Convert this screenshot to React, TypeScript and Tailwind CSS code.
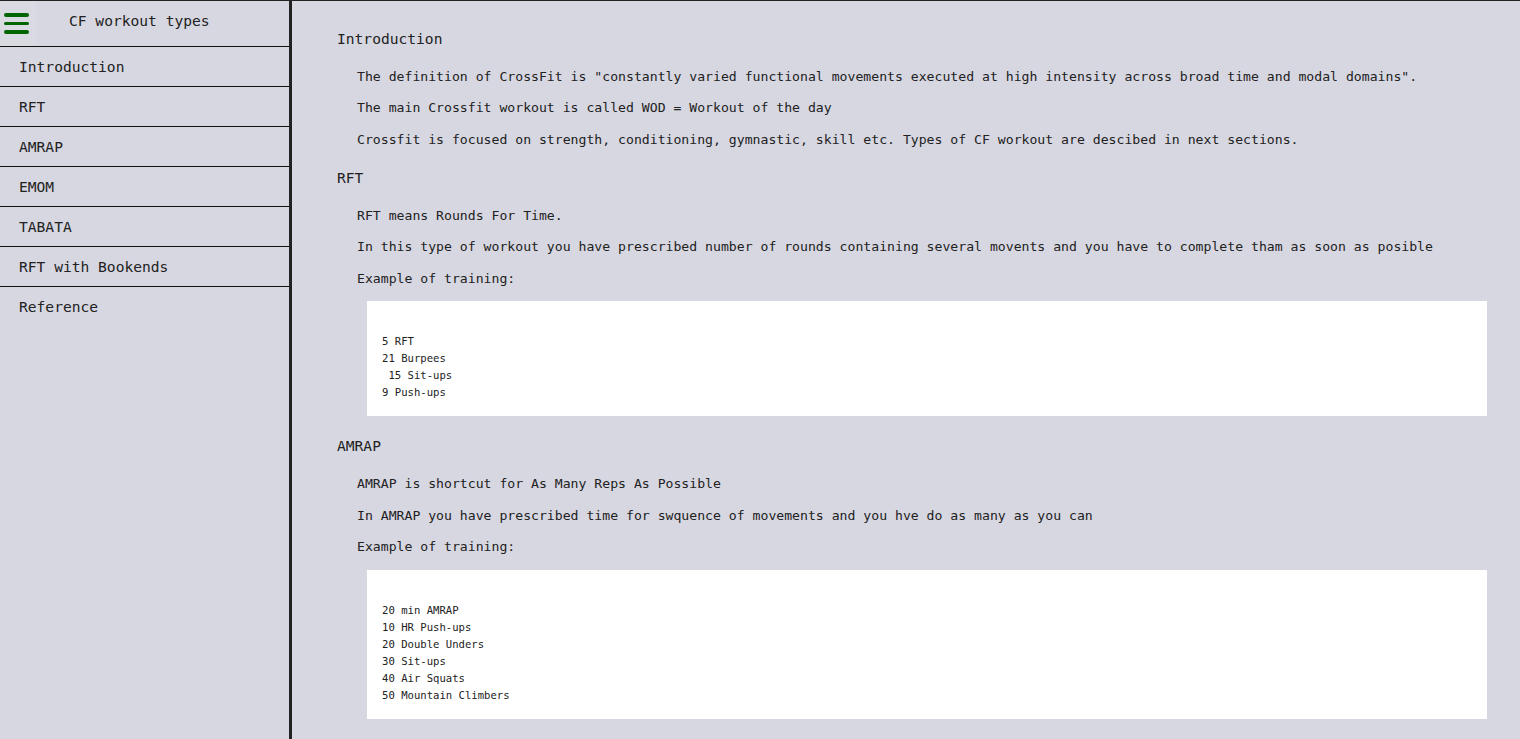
const mono = "font-['DejaVu_Sans_Mono','Liberation_Mono',monospace]";

const navItems = ["Introduction", "RFT", "AMRAP", "EMOM", "TABATA", "RFT with Bookends", "Reference"];

function Sidebar() {
  return (
    <nav className="w-[292px] shrink-0 border-r-[3px] border-[#222]">
      <div className="flex h-[46px] border-b border-[#111]">
        <button className="w-[36px] h-[45px] bg-[#dadae2] flex flex-col items-start justify-center gap-[5px] pl-[4px]">
          <span className="block w-[25px] h-[3.5px] rounded-full bg-[#006400]" />
          <span className="block w-[25px] h-[3.5px] rounded-full bg-[#006400]" />
          <span className="block w-[25px] h-[3.5px] rounded-full bg-[#006400]" />
        </button>
        <div className="pl-[33px] pt-[10px] text-[14.6px] leading-[19px] text-[#222]">CF workout types</div>
      </div>
      {navItems.map((item, i) => (
        <div
          key={item}
          className={
            i === navItems.length - 1
              ? "h-[40px] pl-[19px] flex items-center text-[14.6px] text-[#222]"
              : "h-[40px] pl-[19px] flex items-center text-[14.6px] text-[#222] border-b border-[#111]"
          }
        >
          {item}
        </div>
      ))}
    </nav>
  );
}

function Heading({ children }: { children: React.ReactNode }) {
  return <h2 className="mt-[20px] mb-[20px] text-[14.6px] leading-[19px] text-[#222]">{children}</h2>;
}

function Para({ children }: { children: React.ReactNode }) {
  return <p className="mb-[14.5px] pl-[20px] text-[13.15px] leading-[17px] text-[#222] whitespace-pre">{children}</p>;
}

function Example({ lines }: { lines: string[] }) {
  return (
    <pre className={`ml-[30px] mb-[19.5px] bg-white p-[15px] text-[10.6px] leading-[17px] text-[#222] ${mono}`}>
      {"\n" + lines.join("\n")}
    </pre>
  );
}

export default function App() {
  return (
    <div className={`flex h-[739px] overflow-hidden border-t border-[#222] bg-[#d7d7e1] ${mono}`}>
      <Sidebar />
      <main className="flex-1 pt-[7.5px] pl-[45px] pr-[33px] overflow-hidden">
        <section>
          <Heading>Introduction</Heading>
          <Para>
            The definition of CrossFit is "constantly varied functional movements executed at high intensity across broad time and modal domains".
          </Para>
          <Para>The main Crossfit workout is called WOD = Workout of the day</Para>
          <Para>Crossfit is focused on strength, conditioning, gymnastic, skill etc. Types of CF workout are descibed in next sections.</Para>
        </section>
        <section>
          <Heading>RFT</Heading>
          <Para>RFT means Rounds For Time.</Para>
          <Para>
            In this type of workout you have prescribed number of rounds containing several movents and you have to complete tham as soon as posible
          </Para>
          <Para>Example of training:</Para>
          <Example lines={["5 RFT", "21 Burpees", " 15 Sit-ups", "9 Push-ups"]} />
        </section>
        <section>
          <Heading>AMRAP</Heading>
          <Para>AMRAP is shortcut for As Many Reps As Possible</Para>
          <Para>In AMRAP you have prescribed time for swquence of movements and you hve do as many as you can</Para>
          <Para>Example of training:</Para>
          <Example
            lines={["20 min AMRAP", "10 HR Push-ups", "20 Double Unders", "30 Sit-ups", "40 Air Squats", "50 Mountain Climbers"]}
          />
        </section>
      </main>
    </div>
  );
}
